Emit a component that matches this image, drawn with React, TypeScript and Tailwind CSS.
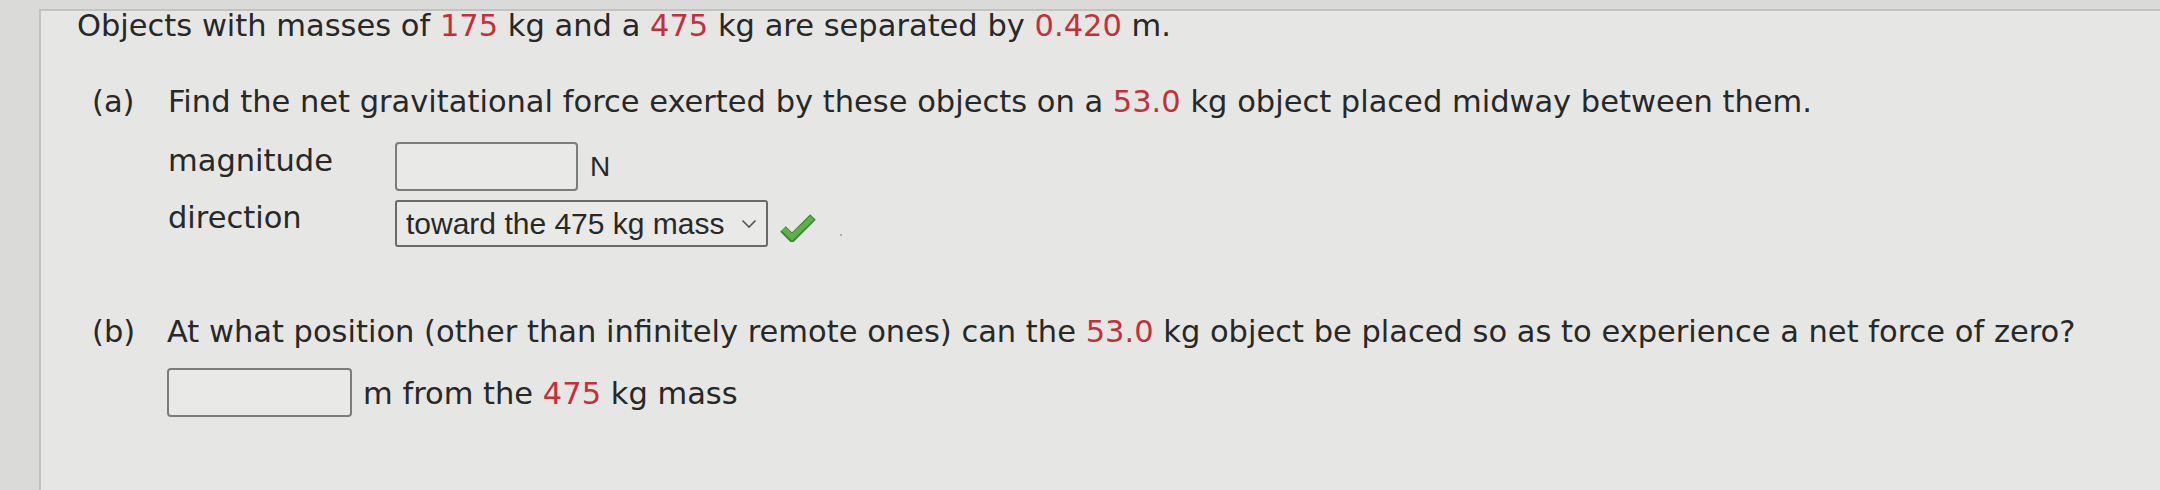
import React from "react";

const R = ({ children }: { children: React.ReactNode }) => (
  <span className="text-[#c2313a]">{children}</span>
);

function Check() {
  return (
    <svg width="36" height="30" viewBox="0 0 36 30" className="block">
      <polyline points="3,17 12,26 33,5" fill="none" stroke="#3d8a34" strokeWidth="8" strokeLinejoin="miter" strokeLinecap="butt" />
      <polyline points="3.8,17 12,25 32.2,5.8" fill="none" stroke="#5fb04c" strokeWidth="5" strokeLinejoin="miter" strokeLinecap="butt" />
    </svg>
  );
}

function Chevron() {
  return (
    <svg width="16" height="10" viewBox="0 0 16 10" className="block">
      <polyline points="1.5,1.5 8,8 14.5,1.5" fill="none" stroke="#555555" strokeWidth="1.6" />
    </svg>
  );
}

export default function App() {
  return (
    <div className="h-[490px] w-[2160px] overflow-hidden bg-[#dadad8] pl-[39px] pt-[9px] text-[#282828] [font-family:'DejaVu_Sans',Verdana,sans-serif]">
      <div className="h-full border-l-2 border-t-2 border-[#c2c2c0] bg-[#e6e6e4] pl-[36px] text-[30.5px] leading-[30px]">
        <div>
          Objects with masses of <R>175</R> kg and a <R>475</R> kg are separated by <R>0.420</R> m.
        </div>

        {/* part a */}
        <div className="mt-[46px] flex pl-[15px]">
          <div className="w-[76px] shrink-0">(a)</div>
          <div className="flex flex-col">
            <div>
              Find the net gravitational force exerted by these objects on a <R>53.0</R> kg object placed midway between them.
            </div>
            <div className="mt-[25px] flex items-start">
              <div className="mt-[4px] w-[227px] shrink-0">magnitude</div>
              <div className="flex items-center">
                <div className="h-[49px] w-[183px] rounded-[4px] border-2 border-[#7c7c7a] bg-[#e9e9e7]" />
                <div className="ml-[12px] text-[28px] [font-family:'Liberation_Sans',Arial,sans-serif]">N</div>
              </div>
            </div>
            <div className="mt-[9px] flex items-start">
              <div className="mt-[3px] w-[227px] shrink-0">direction</div>
              <div className="flex items-center">
                <div className="flex h-[47px] w-[373px] items-center rounded-[3px] border-2 border-[#6a6a68] bg-[#e9e9e7] pl-[9px] pr-[9px] text-[30px] leading-[43px] [font-family:'Liberation_Sans',Arial,sans-serif]">
                  <span className="flex-1 whitespace-nowrap">toward the 475 kg mass</span>
                  <Chevron />
                </div>
                <div className="ml-[12px] mt-[6px]">
                  <Check />
                </div>
                <div className="ml-[24px] mt-[22px] h-[2px] w-[2px] rounded-full bg-[#9a9a98]" />
              </div>
            </div>
          </div>
        </div>

        {/* part b */}
        <div className="mt-[70px] flex pl-[15px]">
          <div className="w-[75px] shrink-0">(b)</div>
          <div className="flex flex-col">
            <div>
              At what position (other than infinitely remote ones) can the <R>53.0</R> kg object be placed so as to experience a net force of zero?
            </div>
            <div className="mt-[21px] flex items-center">
              <div className="h-[49px] w-[185px] rounded-[4px] border-2 border-[#7c7c7a] bg-[#e9e9e7]" />
              <div className="ml-[11px] pt-[3px]">
                m from the <R>475</R> kg mass
              </div>
            </div>
          </div>
        </div>
      </div>
    </div>
  );
}
